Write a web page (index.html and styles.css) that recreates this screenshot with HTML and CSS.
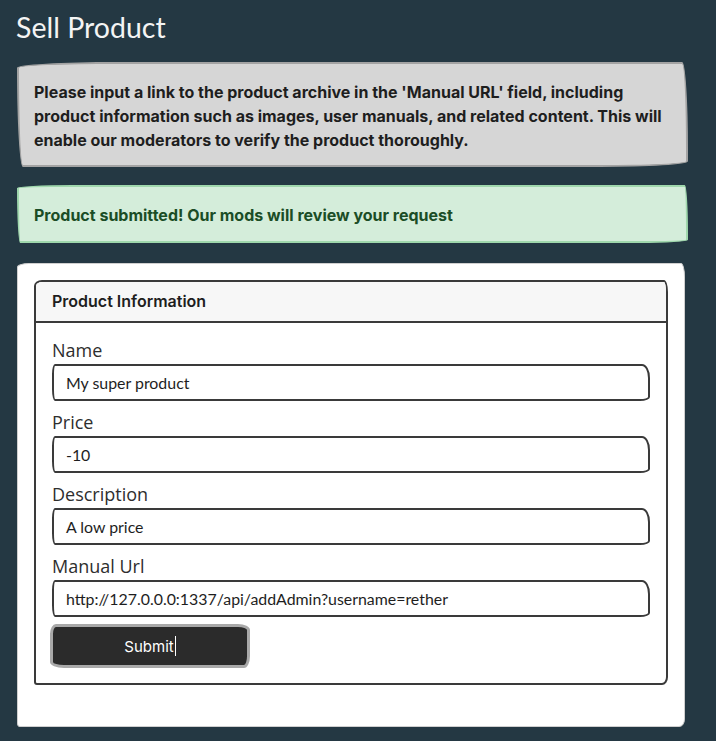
FILE: index.html
```html
<!DOCTYPE html>
<html lang="en">
<head>
<meta charset="utf-8">
<title>Sell Product</title>
<link rel="stylesheet" href="styles.css">
</head>
<body>
<main class="page">
  <h1 class="title">Sell Product</h1>
  <div class="alert alert-info">Please input a link to the product archive in the 'Manual URL' field, including product information such as images, user manuals, and related content. This will enable our moderators to verify the product thoroughly.</div>
  <div class="alert alert-success">Product submitted! Our mods will review your request</div>
  <section class="sheet">
    <div class="card">
      <div class="card-header">Product Information</div>
      <form class="card-body">
        <label class="field-label">Name</label>
        <div class="field-input">My super product</div>
        <label class="field-label">Price</label>
        <div class="field-input">-10</div>
        <label class="field-label">Description</label>
        <div class="field-input">A low price</div>
        <label class="field-label">Manual Url</label>
        <div class="field-input">http://127.0.0.0:1337/api/addAdmin?username=rether</div>
        <button type="button" class="btn">Submit<span class="caret"></span></button>
      </form>
    </div>
  </section>
</main>
</body>
</html>
```
FILE: styles.css
```css
* { box-sizing: border-box; }
html, body { margin: 0; background: #243843; }
.page {
  padding: 10px 28px 17px 17px;
  display: flex;
  flex-direction: column;
}
.title {
  margin: 0 0 0 -1px;
  color: #f4f4f4;
  font-family: Lato, "Open Sans", sans-serif;
  font-weight: 400;
  font-size: 28.5px;
  line-height: 34px;
  height: 52px;
}
.alert {
  font-family: Inter, "Open Sans", sans-serif;
  font-weight: 700;
  font-size: 16px;
  line-height: 24px;
  border: 2px solid;
  border-radius: 255px 15px 225px 15px / 15px 225px 15px 255px;
}
.alert-info {
  background: #d6d6d6;
  border-color: #a3a3a3;
  color: #1e1e1e;
  padding: 16px 8px 13px 15px;
}
.alert-success {
  margin-top: 18px;
  background: #d4edda;
  border-color: #9fd7ac;
  color: #1b4d26;
  padding: 16px 8px 14px 15px;
}
.sheet {
  margin-top: 20px;
  width: 668px;
  background: #ffffff;
  border: 1px solid #cfcfcf;
  border-radius: 12px 4px 6px 3px / 4px 14px 8px 4px;
  padding: 16px 16px 41px 16px;
}
.card {
  border: 2px solid #3a3a3a;
  border-radius: 8px 4px 6px 3px / 6px 12px 8px 3px;
  overflow: hidden;
}
.card-header {
  background: #f7f7f7;
  border-bottom: 2px solid #3a3a3a;
  font-family: Inter, "Open Sans", sans-serif;
  font-weight: 600;
  font-size: 16px;
  line-height: 20px;
  color: #1e1e1e;
  padding: 9px 16px 10px 16px;
}
.card-body {
  padding: 14px 16px 15px 16px;
  display: flex;
  flex-direction: column;
}
.field-label {
  font-family: "Open Sans", Lato, sans-serif;
  font-size: 18px;
  line-height: 27px;
  color: #2e2e2e;
}
.field-input {
  height: 37px;
  margin-bottom: 8px;
  border: 2px solid #3a3a3a;
  border-radius: 3px 8px 10px 3px / 10px 14px 4px 12px;
  padding: 0 12px;
  display: flex;
  align-items: center;
  font-family: Lato, "Open Sans", sans-serif;
  font-size: 15.9px;
  color: #1e1e1e;
}
.btn {
  margin: -1px 0 0 -2px;
  width: 200px;
  height: 44px;
  background: #2b2b2b;
  border: 3px solid #a9a9a9;
  border-radius: 6px 12px 6px 14px / 10px 6px 12px 6px;
  color: #ffffff;
  font-family: Inter, "Open Sans", sans-serif;
  font-size: 15px;
  display: flex;
  align-items: center;
  justify-content: center;
  padding: 0;
}
.caret {
  display: inline-block;
  width: 1px;
  height: 20px;
  background: #ffffff;
  margin-left: 1px;
}
```
